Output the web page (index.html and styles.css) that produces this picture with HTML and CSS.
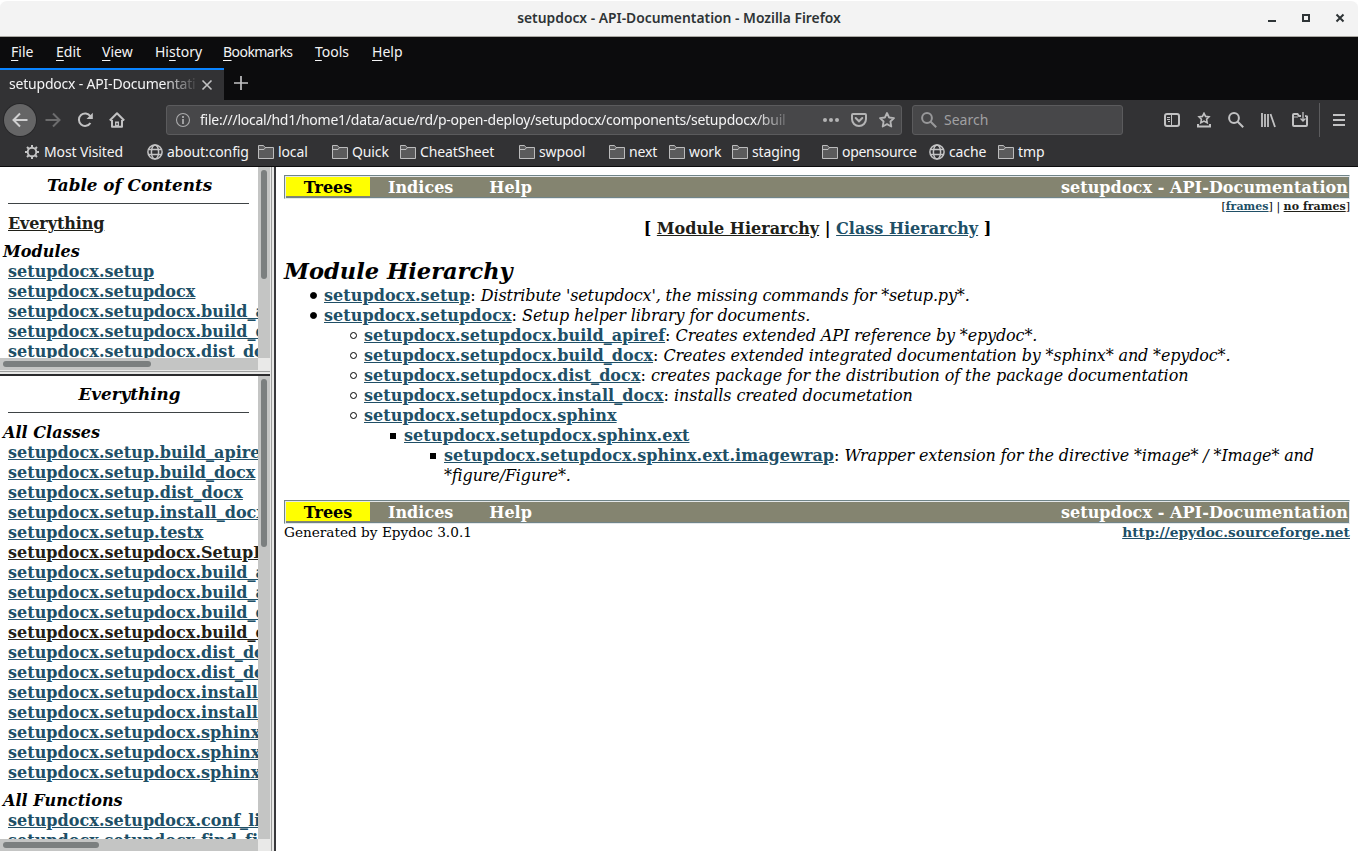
FILE: index.html
```html
<!DOCTYPE html>
<html lang="en">
<head>
<meta charset="utf-8">
<title>setupdocx - API-Documentation</title>
<link rel="stylesheet" href="styles.css">
</head>
<body>
<svg class="defs" width="0" height="0">
  <symbol id="folder" viewBox="0 0 16 16"><path d="M.5 14.500V1.500H5.500L7 3.500H15.500V14.500Z" fill="#5b5b5c" stroke="#bcbcbd"/><path d="M1 5.500H6L7.500 3.500" fill="none" stroke="#bcbcbd"/></symbol>
  <symbol id="globe" viewBox="0 0 16 16"><g fill="none" stroke="#c4c4c5" stroke-width="1.500"><circle cx="8" cy="8" r="7.100"/><ellipse cx="8" cy="8" rx="3.600" ry="7.100"/><path d="M1.500 5.500H14.500M1.500 10.500H14.500"/></g></symbol>
</svg>
<div class="window">
  <header class="titlebar">
    <span></span><span class="title">setupdocx - API-Documentation - Mozilla Firefox</span>
    <svg class="controls" width="90" height="12" viewBox="0 0 90 12"><path d="M0 8H8V10H0Z" fill="#2e3436"/><path d="M35 3H41V9H35Z" fill="none" stroke="#2e3436" stroke-width="2"/><path d="M68.500 2.500L75.500 9.500M75.500 2.500L68.500 9.500" stroke="#2e3436" stroke-width="2"/></svg>
  </header>
  <nav class="menubar"><span><u>F</u>ile</span><span><u>E</u>dit</span><span><u>V</u>iew</span><span>Hi<u>s</u>tory</span><span class="long"><u>B</u>ookmarks</span><span><u>T</u>ools</span><span><u>H</u>elp</span></nav>
  <div class="tabs">
    <div class="tab"><span class="tab-label">setupdocx - API-Documentation</span><svg width="12" height="12" viewBox="0 0 12 12"><path d="M1.500 1.500L10.500 10.500M10.500 1.500L1.500 10.500" stroke="#c2c2c3" stroke-width="1.600"/></svg></div>
    <svg class="newtab" width="14" height="14" viewBox="0 0 14 14"><path d="M7 0V14M0 7H14" stroke="#c2c2c3" stroke-width="1.700"/></svg>
  </div>
  <div class="toolbar">
    <div class="back"><svg width="16" height="16" viewBox="0 0 16 16"><path d="M15.500 8H1.500M8 1.500L1.500 8L8 14.500" fill="none" stroke="#d0d0d1" stroke-width="2"/></svg></div>
    <svg class="fwd" width="16" height="16" viewBox="0 0 16 16"><path d="M.500 8H14.500M8 1.500L14.500 8L8 14.500" fill="none" stroke="#6c6c6d" stroke-width="2"/></svg>
    <svg class="reload" width="16" height="16" viewBox="0 0 16 16"><path d="M13.300 4.300A6.200 6.200 0 1 0 13.400 11" fill="none" stroke="#c2c2c3" stroke-width="2"/><path d="M15.800 .8V7H9.500Z" fill="#c2c2c3"/></svg>
    <svg class="home" width="16" height="16" viewBox="0 0 16 16"><path d="M.8 8.500L8 1.200L15.200 8.500M3 8V14.800H13V8" fill="none" stroke="#c2c2c3" stroke-width="2" stroke-linejoin="round"/><path d="M6 9.500H10V15H6Z" fill="#c2c2c3"/><path d="M8 11V13" stroke="#323234" stroke-width="1.200"/></svg>
    <div class="urlbar">
      <svg width="16" height="16" viewBox="0 0 16 16"><circle cx="8" cy="8" r="6.500" fill="none" stroke="#aaaaab" stroke-width="1.100"/><path d="M8 7V12M8 4V6" stroke="#aaaaab" stroke-width="1.800"/></svg>
      <span class="url">file:///local/hd1/home1/data/acue/rd/p-open-deploy/setupdocx/components/setupdocx/buil</span>
      <svg class="dots" width="18" height="6" viewBox="0 0 18 6"><g fill="#b4b4b5"><circle cx="3" cy="3" r="2"/><circle cx="9" cy="3" r="2"/><circle cx="15" cy="3" r="2"/></g></svg>
      <svg class="pocket" width="16" height="16" viewBox="0 0 16 16"><path d="M2 2H14Q15 2 15 3V7A7 7 0 0 1 1 7V3Q1 2 2 2ZM4.700 6L8 9.300L11.300 6" fill="none" stroke="#b4b4b5" stroke-width="2" stroke-linecap="round"/></svg>
      <svg width="16" height="16" viewBox="0 0 16 16"><path d="M8 1L10.100 5.500L15 6.100L11.400 9.500L12.300 14.500L8 12.100L3.700 14.500L4.600 9.500L1 6.100L5.900 5.500Z" fill="none" stroke="#b4b4b5" stroke-width="1.800" stroke-linejoin="round"/></svg>
    </div>
    <div class="search"><svg width="16" height="16" viewBox="0 0 16 16"><circle cx="6" cy="6" r="4.900" fill="none" stroke="#98989a" stroke-width="2"/><path d="M9.500 9.500L15.200 15.200" stroke="#98989a" stroke-width="2"/></svg><span>Search</span></div>
    <div class="tools">
      <svg width="16" height="16" viewBox="0 0 16 16"><rect x="1" y="2" width="14" height="12" rx="2" fill="none" stroke="#c2c2c3" stroke-width="2"/><path d="M7.500 2V14" stroke="#c2c2c3"/><path d="M3 5.500H6M3 7.500H6M4 9.500H6" stroke="#c2c2c3"/></svg>
      <svg width="16" height="16" viewBox="0 0 16 16"><path d="M8 1.300L9.600 4.400L13 4.900L10.600 7.300L11.200 10.700L8 9.100L4.800 10.700L5.400 7.300L3 4.900L6.400 4.400Z" fill="none" stroke="#c2c2c3" stroke-width="1.600"/><path d="M2 12V14.500H14V12" fill="none" stroke="#c2c2c3" stroke-width="2"/></svg>
      <svg width="16" height="16" viewBox="0 0 16 16"><circle cx="6" cy="6" r="4.900" fill="none" stroke="#c2c2c3" stroke-width="2"/><path d="M9.500 9.500L15.200 15.200" stroke="#c2c2c3" stroke-width="2"/></svg>
      <svg width="16" height="16" viewBox="0 0 16 16"><path d="M2 1V15M5 2V15M8 2V15M10.500 2L15 15" stroke="#c2c2c3" stroke-width="1.800"/></svg>
      <svg width="16" height="16" viewBox="0 0 16 16"><path d="M9 4H7L5.500 2H2Q1 2 1 3V13Q1 14 2 14H14Q15 14 15 13V4.500Q15 4 13 4" fill="none" stroke="#c2c2c3" stroke-width="2"/><path d="M1 5H6" stroke="#c2c2c3"/><path d="M11 0V8.500M8.500 6.500L11 9L13.500 6.500" fill="none" stroke="#c2c2c3" stroke-width="1.300"/></svg>
    </div>
    <div class="rule"></div>
    <svg class="burger" width="12" height="12" viewBox="0 0 12 12"><path d="M0 1H12M0 6H12M0 11H12" stroke="#c2c2c3" stroke-width="2"/></svg>
  </div>
  <div class="bookmarks">
    <span><svg><g transform="translate(8 8)" fill="none" stroke="#c4c4c5"><circle r="4.300" stroke-width="1.900"/><path d="M0-4.500V-7M0 4.500V7M-4.500 0H-7M4.500 0H7M3.200-3.200L5-5M-3.200-3.200L-5-5M3.200 3.200L5 5M-3.200 3.200L-5 5" stroke-width="2"/></g></svg>Most Visited</span>
    <span><svg><use href="#globe"/></svg>about:config</span>
    <span><svg><use href="#folder"/></svg>local</span>
    <span><svg><use href="#folder"/></svg>Quick</span>
    <span><svg><use href="#folder"/></svg>CheatSheet</span>
    <span><svg><use href="#folder"/></svg>swpool</span>
    <span><svg><use href="#folder"/></svg>next</span>
    <span><svg><use href="#folder"/></svg>work</span>
    <span><svg><use href="#folder"/></svg>staging</span>
    <span class="long"><svg><use href="#folder"/></svg>opensource</span>
    <span><svg><use href="#globe"/></svg>cache</span>
    <span><svg><use href="#folder"/></svg>tmp</span>
  </div>
  <div class="frames">
    <div class="side">
      <section class="frame toc">
        <div class="view">
          <h1>Table of Contents</h1><hr>
          <p class="everything"><a class="seen">Everything</a></p>
          <h2>Modules</h2>
          <a>setupdocx.setup</a><a>setupdocx.setupdocx</a><a>setupdocx.setupdocx.build_apiref</a><a>setupdocx.setupdocx.build_docx</a><a>setupdocx.setupdocx.dist_docx</a>
        </div>
        <div class="vbar"><i></i></div><div class="hbar"><i></i></div><div class="corner"></div>
      </section>
      <div class="hsplit"></div>
      <section class="frame all">
        <div class="view">
          <h1>Everything</h1><hr>
          <h2>All Classes</h2>
          <a>setupdocx.setup.build_apiref</a><a>setupdocx.setup.build_docx</a><a>setupdocx.setup.dist_docx</a><a>setupdocx.setup.install_docx</a><a>setupdocx.setup.testx</a><a class="seen">setupdocx.setupdocx.SetupDocXError</a><a>setupdocx.setupdocx.build_apiref</a><a>setupdocx.setupdocx.build_apiref</a><a>setupdocx.setupdocx.build_docx</a><a class="seen">setupdocx.setupdocx.build_docx</a><a>setupdocx.setupdocx.dist_docx</a><a>setupdocx.setupdocx.dist_docx</a><a>setupdocx.setupdocx.install_docx</a><a>setupdocx.setupdocx.install_docx</a><a>setupdocx.setupdocx.sphinx</a><a>setupdocx.setupdocx.sphinx</a><a>setupdocx.setupdocx.sphinx</a>
          <h2 class="functions">All Functions</h2>
          <a>setupdocx.setupdocx.conf_list</a><a>setupdocx.setupdocx.find_files</a>
        </div>
        <div class="vbar"><i></i></div><div class="hbar"><i></i></div><div class="corner"></div>
      </section>
    </div>
    <div class="vsplit"></div>
    <main>
      <div class="navbar"><b class="sel">Trees</b><b class="indices">Indices</b><b class="help">Help</b><b class="project">setupdocx - API-Documentation</b></div>
      <div class="options">[<a>frames</a>]&nbsp;|&nbsp;<a class="seen">no frames</a>]</div>
      <div class="crumbs"><b>[ <a class="seen">Module Hierarchy</a> | <a>Class Hierarchy</a> ]</b></div>
      <h1>Module Hierarchy</h1>
      <ul>
        <li><a>setupdocx.setup</a>: <em class="tight">Distribute 'setupdocx', the missing commands for *setup.py*.</em></li>
        <li><a>setupdocx.setupdocx</a>: <em>Setup helper library for documents.</em>
          <ul>
            <li><a>setupdocx.setupdocx.build_apiref</a>: <em class="tight">Creates extended API reference by *epydoc*.</em></li>
            <li><a>setupdocx.setupdocx.build_docx</a>: <em class="tight">Creates extended integrated documentation by *sphinx* and *epydoc*.</em></li>
            <li><a>setupdocx.setupdocx.dist_docx</a>: <em>creates package for the distribution of the package documentation</em></li>
            <li><a>setupdocx.setupdocx.install_docx</a>: <em>installs created documetation</em></li>
            <li><a>setupdocx.setupdocx.sphinx</a>
              <ul><li><a>setupdocx.setupdocx.sphinx.ext</a>
                <ul><li><a>setupdocx.setupdocx.sphinx.ext.imagewrap</a>: <em class="tight">Wrapper extension for the directive *image* / *Image* and *figure/Figure*.</em></li></ul>
              </li></ul>
            </li>
          </ul>
        </li>
      </ul>
      <div class="navbar lower"><b class="sel">Trees</b><b class="indices">Indices</b><b class="help">Help</b><b class="project">setupdocx - API-Documentation</b></div>
      <footer><span>Generated by Epydoc 3.0.1</span><a>http://epydoc.sourceforge.net</a></footer>
    </main>
  </div>
</div>
</body>
</html>
```
FILE: styles.css
```css
*, *::before { box-sizing: border-box; }
body { margin: 0; background: #fff; color: #000; }
svg { display: block; flex: none; }
.defs { position: absolute; }
.window { width: 1358px; height: 851px; overflow: hidden; display: flex; flex-direction: column; font: 14px/20px "Noto Sans", sans-serif; }
.titlebar, .menubar, .tabs, .toolbar, .bookmarks { flex: none; white-space: nowrap; color: #f4f4f5; }
.titlebar { height: 37px; display: grid; grid-template-columns: 1fr auto 1fr; align-items: center; background: #f3f3f3; border-top: 1px solid #fff; border-bottom: 1px solid #aaa8a2; padding-bottom: 2px; border-radius: 7px 7px 0 0; color: #2e3436; }
.title { font-weight: 600; font-size: 13.850px; }
.controls { justify-self: end; }
.menubar { height: 31px; padding: 5px 0 0 11px; background: #0c0c0d; display: grid; grid-template-columns: 45px 46px 53px 68px 92px 57px 60px; }
.menubar u { text-underline-offset: 3px; }
.menubar .long { letter-spacing: -.55px; }
.tabs { height: 32px; background: #0c0c0d; display: flex; }
.tab { width: 224px; background: #323234; border-top: 2px solid #0a84ff; display: flex; align-items: center; padding: 0 0 1px 9px; gap: 6px; }
.tab-label { width: 186px; margin-top: -1px; overflow: hidden; letter-spacing: -.2px; -webkit-mask-image: linear-gradient(90deg, #000 155px, transparent 190px); mask-image: linear-gradient(90deg, #000 155px, transparent 190px); }
.newtab { margin: 8px 0 0 10px; }
.toolbar { height: 40px; background: #323234; display: flex; align-items: center; padding-left: 4px; }
.back { width: 32px; height: 32px; border-radius: 50%; background: #656566; box-shadow: 0 0 0 1px #28282a; display: grid; place-items: center; }
.fwd { margin-left: 9px; }
.reload, .home { margin-left: 16px; }
.urlbar, .search { height: 30px; background: #474749; border: 1px solid #5b5b5d; border-radius: 3px; display: flex; align-items: center; }
.urlbar { width: 736px; margin-left: 41px; padding: 0 6px 0 8px; }
.url { width: 586px; margin-left: 9px; overflow: hidden; letter-spacing: -.24px; -webkit-mask-image: linear-gradient(90deg, #000 555px, transparent 594px); mask-image: linear-gradient(90deg, #000 555px, transparent 594px); }
.dots { margin-left: 36px; }
.pocket { margin: 0 12px 0 11px; }
.search { width: 211px; margin-left: 10px; padding-left: 8px; gap: 7px; color: #a0a0a2; }
.tools { display: flex; gap: 16px; margin-left: 41px; }
.rule { width: 1px; height: 34px; background: #5c5c5e; margin-left: 11px; }
.burger { margin-left: 13px; }
.bookmarks { height: 27px; background: #323234; border-bottom: 1px solid #0c0c0d; padding-left: 24px; display: grid; grid-template-columns: 123px 111px 74px 68px 119px 90px 60px 63px 90px 107px 69px 80px; letter-spacing: -.12px; }
.bookmarks span { display: flex; align-items: center; gap: 4px; height: 24px; }
.bookmarks .long { letter-spacing: -.3px; }
.bookmarks svg { width: 16px; height: 16px; }
.frames { flex: 1; min-height: 0; display: flex; font: 16px/20px "DejaVu Serif", serif; }
.side { width: 270px; display: flex; flex-direction: column; }
.frame { display: grid; grid-template-columns: 258px 12px; grid-template-rows: minmax(0, 1fr) 12px; background: #fff; }
.toc { height: 203px; }
.all { height: 475px; }
.view { overflow: hidden; padding: 8px 8px 0; white-space: nowrap; }
.view h1, .view h2 { font-size: 16px; line-height: 20px; font-style: italic; margin: 0; }
.view h1 { text-align: center; font-size: 16.800px; padding-left: 1px; }
.view hr { width: 241px; height: 1px; border: 0; background: #3e4345; margin: 8px 0 10px; }
.view h2 { margin-left: -5px; letter-spacing: .05px; }
.view p { margin: 0 0 8px; }
.view p a { letter-spacing: -.1px; }
.view > a { display: block; letter-spacing: .04px; }
.view h2.functions { margin-top: 8px; }
.vbar, .hbar { background: #c4c5c4; padding: 3px; }
.vbar i, .hbar i { display: block; background: #7b7f7f; border-radius: 3px; }
.vbar i { width: 6px; height: 109px; }
.all .vbar i { height: 168px; }
.hbar i { width: 148px; height: 6px; }
.all .hbar i { width: 96px; }
.corner { background: #e9e9e8; }
.hsplit { height: 6px; background: linear-gradient(#e8e8e7 1px, #9c9d9c 1px 2px, #e8e8e7 2px 4px, #2b2b2d 4px 6px); }
.vsplit { width: 6px; background: linear-gradient(90deg, #e8e8e7 1px, #9c9d9c 1px 2px, #e8e8e7 2px 4px, #38383b 4px 6px); }
a { color: #204f66; font-weight: bold; text-decoration: underline; letter-spacing: .05px; }
a.seen { color: #202018; }
main { flex: 1; padding: 8px 8px 0; }
.navbar { height: 24px; border: 1px solid; border-color: #708488 #e4e8ea #e4e8ea #708488; display: flex; background: #848470; color: #fff; box-shadow: inset 1px 1px #e4e8ea, inset -1px -1px #708488; padding: 1px 2px 2px; line-height: 21px; }
.sel { width: 84px; margin-left: -1px; background: #ff0; color: #000; text-align: center; }
.indices { margin-left: 18px; }
.help { margin-left: 36px; }
.project { margin-left: auto; margin-right: -1px; letter-spacing: .07px; }
.options { font-size: 11px; line-height: 14px; text-align: right; padding-top: 1px; }
.crumbs { text-align: center; margin-top: 5px; padding-left: 1px; }
.crumbs a { letter-spacing: 0; }
main h1 { font-size: 22.550px; line-height: 28px; font-style: italic; margin: 18px 0 1px; }
em { letter-spacing: -.09px; }
em.tight { letter-spacing: -.15px; }
ul { margin: 0; padding-left: 40px; list-style: none; }
li::before { content: ""; display: inline-block; width: 7px; height: 7px; margin: 0 7px 0 -14px; border: 1px solid #000; border-radius: 50%; vertical-align: 2px; }
main > ul > li::before { background: #000; }
main > ul ul ul li::before { width: 6px; height: 6px; margin-right: 8px; background: #000; border-radius: 0; }
.lower { margin-top: 14px; }
footer { display: flex; justify-content: space-between; font-size: 13.650px; line-height: 18px; margin-top: -1px; }
footer a { letter-spacing: .07px; }
```
